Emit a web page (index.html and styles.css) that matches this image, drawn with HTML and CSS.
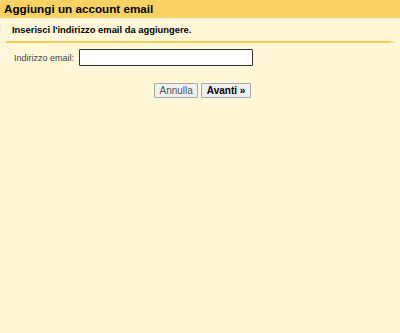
FILE: index.html
```html
<!DOCTYPE html>
<html lang="it">
<head>
<meta charset="utf-8">
<link rel="stylesheet" href="styles.css">
</head>
<body>
<div class="header"><h1 class="title">Aggiungi un account email</h1></div>
<div class="content">
  <p class="subtitle">Inserisci l'indirizzo email da aggiungere.</p>
  <div class="rule"></div>
  <div class="field">
    <label class="label" for="email">Indirizzo email:</label>
    <input class="input" id="email" type="text">
  </div>
  <div class="actions">
    <button class="btn">Annulla</button>
    <button class="btn btn-primary">Avanti »</button>
  </div>
</div>
</body>
</html>
```
FILE: styles.css
```css
html, body {
  margin: 0;
  padding: 0;
  background: #fff7d7;
  font-family: "Liberation Sans", Arial, sans-serif;
  height: 100%;
}
.header {
  background: #fad163;
  height: 18px;
  padding: 0 4px;
  display: flex;
  align-items: center;
}
.title {
  margin: 0;
  font-size: 11.7px;
  font-weight: bold;
  color: #000;
  line-height: 18px;
}
.content {
  padding: 0 4px 0 6px;
}
.subtitle {
  margin: 0;
  padding: 6px 0 0 6px;
  height: 17px;
  font-size: 9.4px;
  font-weight: bold;
  line-height: 12px;
}
.rule {
  height: 2px;
  background: linear-gradient(to right, #f7cd59 0, #f7cd59 98%, #fff7d7 100%);
}
.field {
  display: flex;
  align-items: center;
  margin-top: 6px;
  padding-left: 8px;
}
.label {
  font-size: 9px;
  color: #444;
  width: 65px;
}
.input {
  box-sizing: border-box;
  width: 174px;
  height: 17px;
  margin: 0;
  border: 1px solid #333;
  border-radius: 1px;
  background: #fff;
  padding: 0 2px;
}
.actions {
  display: flex;
  gap: 3px;
  margin-top: 17px;
  padding-left: 148px;
}
.btn {
  box-sizing: border-box;
  height: 15px;
  margin: 0;
  padding: 0 4.5px;
  font-family: "Liberation Sans", Arial, sans-serif;
  font-size: 10px;
  line-height: 13px;
  color: #555;
  background: #f0f0f0;
  border: 1px solid #aaa;
  border-radius: 1px;
}
.btn-primary {
  color: #000;
  font-weight: bold;
}
```
